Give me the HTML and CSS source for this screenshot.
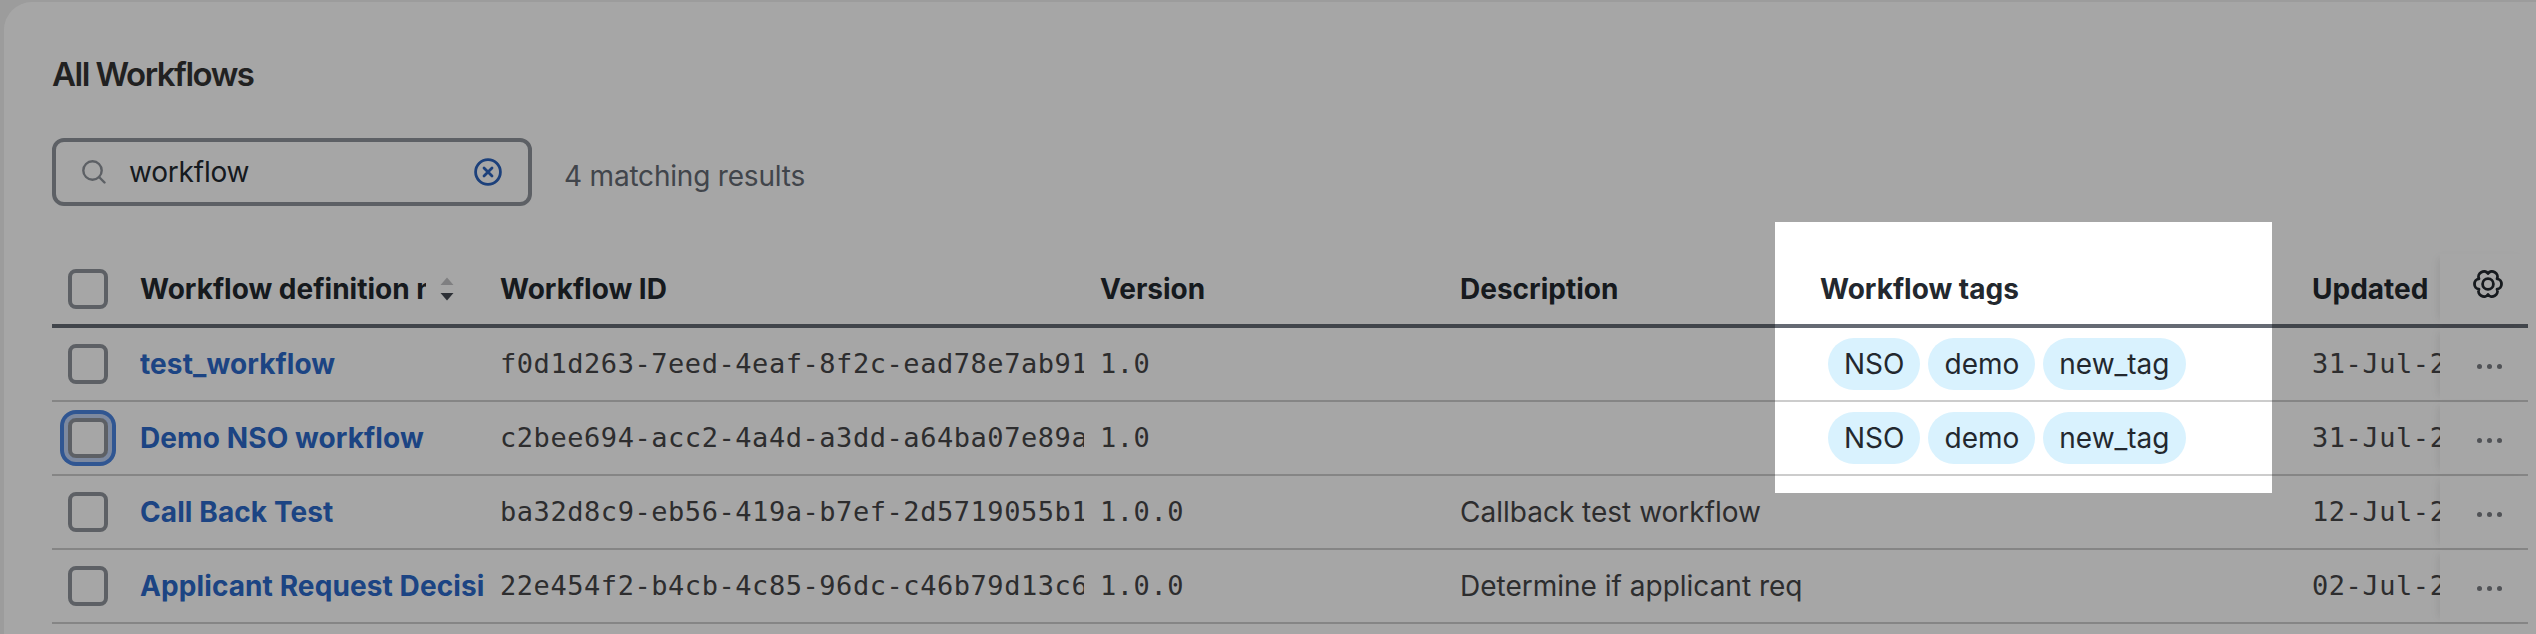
FILE: index.html
```html
<!DOCTYPE html>
<html lang="en">
<head>
    <meta charset="UTF-8">
    <meta name="viewport" content="width=device-width, initial-scale=1.0">
    <title>All Workflows</title>
    <link rel="stylesheet" href="styles.css">
</head>
<body>
    <main class="panel">
        <h1 class="title">All Workflows</h1>

        <div class="toolbar">
            <label class="search">
                <svg class="search-icon" viewBox="0 0 24 24"><circle cx="10.5" cy="10.5" r="9.2"/><path d="M17 17l5.5 5.5"/></svg>
                <span class="search-value">workflow</span>
                <svg class="clear-icon" viewBox="0 0 28 28"><circle cx="14" cy="14" r="12.4"/><path d="M10 10l8 8M18 10l-8 8"/></svg>
            </label>
            <span class="matches">4 matching results</span>
        </div>

        <div class="table">
            <div class="row head">
                <div class="cell check"><span class="checkbox"></span></div>
                <div class="cell sortable">
                    <span class="label">Workflow definition name</span>
                    <svg class="sort" viewBox="0 0 14 24"><path class="up" d="M7 0.5L13.5 8H0.5z"/><path d="M7 23.5L0.5 16h13z"/></svg>
                </div>
                <div class="cell">Workflow ID</div>
                <div class="cell">Version</div>
                <div class="cell">Description</div>
                <div class="cell">Workflow tags</div>
                <div class="cell">Updated</div>
                <div class="cell actions">
                    <svg class="gear" viewBox="0 0 30 30"><path d="M24 20.2C26.7 25.6 18.3 30.5 15 25.4C11.7 30.5 3.3 25.6 6 20.2C0 19.9 0 10.1 6 9.8C3.3 4.4 11.7 -.5 15 4.6C18.3 -.5 26.7 4.4 24 9.8C30 10.1 30 19.9 24 20.2z"/><circle cx="15" cy="15" r="5.4"/></svg>
                </div>
            </div>
            <div class="row">
                <div class="cell check"><span class="checkbox"></span></div>
                <div class="cell name">test_workflow</div>
                <div class="cell mono">f0d1d263-7eed-4eaf-8f2c-ead78e7ab91</div>
                <div class="cell mono">1.0</div>
                <div class="cell"></div>
                <div class="cell tags"><span class="tag">NSO</span><span class="tag">demo</span><span class="tag">new_tag</span></div>
                <div class="cell mono">31-Jul-2</div>
                <div class="cell actions"><span class="dots"><i></i><i></i><i></i></span></div>
            </div>
            <div class="row">
                <div class="cell check"><span class="checkbox focus"></span></div>
                <div class="cell name">Demo NSO workflow</div>
                <div class="cell mono">c2bee694-acc2-4a4d-a3dd-a64ba07e89a</div>
                <div class="cell mono">1.0</div>
                <div class="cell"></div>
                <div class="cell tags"><span class="tag">NSO</span><span class="tag">demo</span><span class="tag">new_tag</span></div>
                <div class="cell mono">31-Jul-2</div>
                <div class="cell actions"><span class="dots"><i></i><i></i><i></i></span></div>
            </div>
            <div class="row">
                <div class="cell check"><span class="checkbox"></span></div>
                <div class="cell name">Call Back Test</div>
                <div class="cell mono">ba32d8c9-eb56-419a-b7ef-2d5719055b1</div>
                <div class="cell mono">1.0.0</div>
                <div class="cell">Callback test workflow</div>
                <div class="cell"></div>
                <div class="cell mono">12-Jul-2</div>
                <div class="cell actions"><span class="dots"><i></i><i></i><i></i></span></div>
            </div>
            <div class="row">
                <div class="cell check"><span class="checkbox"></span></div>
                <div class="cell name">Applicant Request Decisi</div>
                <div class="cell mono">22e454f2-b4cb-4c85-96dc-c46b79d13c6</div>
                <div class="cell mono">1.0.0</div>
                <div class="cell">Determine if applicant req</div>
                <div class="cell"></div>
                <div class="cell mono">02-Jul-2</div>
                <div class="cell actions"><span class="dots"><i></i><i></i><i></i></span></div>
            </div>
        </div>
    </main>

    <div class="spotlight"></div>
</body>
</html>
```

FILE: styles.css
```css
* {
    box-sizing: border-box;
}
body {
    margin: 0;
    height: 634px;
    padding: 2px 0 0 4px;
    overflow: hidden;
    position: relative;
    background: #f0f0f0;
    font-family: Inter, "Liberation Sans", sans-serif;
    font-size: 28px;
    line-height: 40px;
    color: #464648;
}
.panel {
    height: 660px;
    padding: 48px 8px 0 48px;
    background: #fff;
    border-radius: 28px 0 0 0;
}
.title {
    margin: 0;
    font-size: 33px;
    line-height: 48px;
    font-weight: 600;
    letter-spacing: -1.5px;
    color: #343434;
}
.toolbar {
    display: flex;
    align-items: center;
    gap: 32px;
    margin-top: 40px;
}
.search {
    display: flex;
    align-items: center;
    width: 480px;
    height: 68px;
    padding: 0 26px;
    border: 4px solid #8f949b;
    border-radius: 12px;
}
.search-icon {
    width: 24px;
    height: 24px;
    fill: none;
    stroke: #8f949b;
    stroke-width: 2.4;
    stroke-linecap: round;
}
.search-value {
    flex: 1;
    margin-left: 23px;
    letter-spacing: -0.2px;
    color: #23282e;
}
.clear-icon {
    width: 28px;
    height: 28px;
    fill: none;
    stroke: #2b63bd;
    stroke-width: 2.8;
    stroke-linecap: round;
}
.matches {
    letter-spacing: -0.2px;
    padding-top: 7px;
    color: #656a73;
}
.table {
    margin-top: 48px;
}
.row {
    display: grid;
    grid-template-columns: 88px 360px 600px 360px 360px 492px 128px 88px;
    height: 74px;
    border-bottom: 2px solid #ccc;
}
.head {
    border-bottom: 4px solid #656a73;
    font-weight: 700;
    color: #23282e;
}
.cell {
    display: flex;
    align-items: center;
    margin-right: 16px;
    overflow: hidden;
    white-space: nowrap;
}
.check {
    margin-right: 0;
    padding-left: 16px;
    overflow: visible;
}
.checkbox {
    width: 40px;
    height: 40px;
    border: 4px solid #8f949b;
    border-radius: 8px;
}
.focus {
    box-shadow: 0 0 0 4px #c0d3f5, 0 0 0 8px #4a84e0;
}
.label {
    width: 286px;
    overflow: hidden;
}
.sort {
    width: 14px;
    height: 24px;
    margin-left: 14px;
    fill: #464b54;
}
.sort .up {
    fill: #c4c4c6;
}
.name {
    font-weight: 700;
    letter-spacing: 0.1px;
    color: #2b69c9;
}
.mono {
    font-family: "DejaVu Sans Mono", monospace;
    font-size: 27px;
    letter-spacing: 0.55px;
}
.tags {
    gap: 8px;
    padding-left: 8px;
}
.tag {
    height: 52px;
    padding: 0 16px;
    border-radius: 26px;
    line-height: 52px;
    background: #d9f2fe;
    color: #23282e;
}
.row .cell:nth-child(7) {
    margin-right: 0;
}
.row .actions {
    margin-right: 0;
    padding-left: 37px;
    overflow: visible;
    box-shadow: -6px 0 8px -4px rgba(0, 0, 0, 0.08);
}
.head .actions {
    padding-left: 33px;
}
.gear {
    width: 30px;
    height: 30px;
    margin-top: -10px;
    fill: none;
    stroke: #23282e;
    stroke-width: 2.8;
    stroke-linejoin: round;
}
.dots {
    display: flex;
    gap: 5px;
    padding-top: 4px;
}
.dots i {
    width: 5px;
    height: 5px;
    border-radius: 50%;
    background: #7b7e84;
}
/* dims the page around the tags column */
.spotlight {
    position: absolute;
    left: 1775px;
    top: 222px;
    width: 497px;
    height: 271px;
    box-shadow: 0 0 0 3000px rgba(0, 0, 0, 0.35);
}
```
